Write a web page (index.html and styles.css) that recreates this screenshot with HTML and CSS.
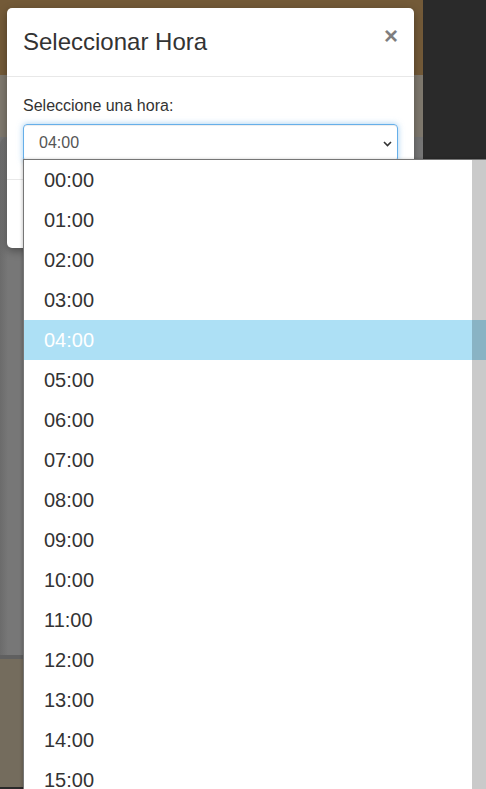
FILE: index.html
```html
<!DOCTYPE html>
<html lang="es">
<head>
<meta charset="utf-8">
<title>Seleccionar Hora</title>
<link rel="stylesheet" href="styles.css">
</head>
<body>
<div class="page">
  <div class="band"></div>
  <div class="side"></div>
  <div class="beige"></div>
  <div class="panel"></div>
  <div class="bottom"></div>
</div>

<div class="modal">
  <div class="modal-header">
    <h4 class="modal-title">Seleccionar Hora</h4>
    <button class="close" type="button">×</button>
  </div>
  <div class="modal-body">
    <label class="field-label">Seleccione una hora:</label>
    <div class="select">
      <span class="select-value">04:00</span>
      <svg class="chevron" width="9" height="6" viewBox="0 0 9 6"><path d="M1 1 L4.5 4.5 L8 1" fill="none" stroke="#333" stroke-width="1.6"/></svg>
    </div>
  </div>
  <div class="modal-footer"><div class="footer-space"></div></div>
</div>

<div class="dropdown">
  <ul class="options">
    <li class="option">00:00</li>
    <li class="option">01:00</li>
    <li class="option">02:00</li>
    <li class="option">03:00</li>
    <li class="option selected">04:00</li>
    <li class="option">05:00</li>
    <li class="option">06:00</li>
    <li class="option">07:00</li>
    <li class="option">08:00</li>
    <li class="option">09:00</li>
    <li class="option">10:00</li>
    <li class="option">11:00</li>
    <li class="option">12:00</li>
    <li class="option">13:00</li>
    <li class="option">14:00</li>
    <li class="option">15:00</li>
  </ul>
  <div class="scrollbar">
    <div class="track-gap"></div>
    <div class="track-hi"></div>
  </div>
</div>
</body>
</html>
```

FILE: styles.css
```css
html, body {
  margin: 0;
  padding: 0;
}
body {
  width: 486px;
  height: 789px;
  overflow: hidden;
  position: relative;
  font-family: "Liberation Sans", Arial, sans-serif;
  background: #757575;
}

.page {
  display: grid;
  grid-template-columns: 423px 63px;
  grid-template-rows: 75px 62px 518px 134px;
  height: 789px;
}
.band {
  grid-column: 1;
  grid-row: 1;
  background: #735a38;
}
.side {
  grid-column: 2;
  grid-row: 1 / 4;
  background: #2a2a2a;
}
.beige {
  grid-column: 1;
  grid-row: 2;
  background: #7f796e;
}
.panel {
  grid-column: 1;
  grid-row: 3;
  background: linear-gradient(to right, #6b6b6b 0px, #777777 8px, #777777 100%);
  border-radius: 8px 8px 0 0;
}
.bottom {
  grid-column: 1 / -1;
  grid-row: 4;
  background: #746c5d;
  border-top: 4px solid #606060;
  border-bottom: 2px solid #2a2a2a;
}

/* Modal */
.modal {
  position: absolute;
  left: 7px;
  top: 8px;
  width: 407px;
  background: #fff;
  border-radius: 5px;
  box-shadow: 0 3px 9px rgba(0, 0, 0, 0.35);
}
.modal-header {
  display: flex;
  justify-content: space-between;
  align-items: flex-start;
  padding: 20px 16px 21px 16px;
  border-bottom: 1px solid #e8e8e8;
}
.modal-title {
  margin: 0;
  font-size: 24px;
  line-height: 27px;
  font-weight: normal;
  color: #333;
}
.close {
  margin: -4px 0 0 0;
  padding: 0;
  border: 0;
  background: transparent;
  font-family: "Liberation Sans", Arial, sans-serif;
  font-size: 24px;
  font-weight: bold;
  line-height: 24px;
  color: #000;
  opacity: 0.5;
}
.modal-body {
  padding: 17px 16px 17px 16px;
}
.field-label {
  display: block;
  font-size: 16px;
  line-height: 23px;
  color: #333;
  margin-bottom: 7px;
}
.select {
  box-sizing: border-box;
  height: 38px;
  display: flex;
  align-items: center;
  justify-content: space-between;
  padding: 0 5px 0 15px;
  border: 1px solid #66afe9;
  border-radius: 4px;
  box-shadow: inset 0 1px 1px rgba(0, 0, 0, 0.075), 0 0 6px rgba(102, 175, 233, 0.6);
  font-size: 16px;
  color: #555;
}
.chevron {
  display: block;
  margin-top: 2px;
}
.modal-footer {
  border-top: 1px solid #e8e8e8;
  padding: 15px 16px;
}
.footer-space {
  height: 38px;
}

/* Open dropdown list */
.dropdown {
  position: absolute;
  left: 23px;
  top: 159px;
  right: 0;
  bottom: 0;
  display: flex;
  background: #fff;
  border-top: 1px solid #767676;
  border-left: 1px solid #767676;
  overflow: hidden;
  box-shadow: -1px 0 3px rgba(0, 0, 0, 0.2);
}
.options {
  flex: 1;
  list-style: none;
  margin: 0;
  padding: 0;
}
.option {
  height: 40px;
  line-height: 40px;
  padding-left: 20px;
  font-size: 20px;
  color: #333;
}
.option.selected {
  background: #ade0f5;
  color: #fff;
}
.scrollbar {
  width: 14px;
  background: #cacaca;
  display: flex;
  flex-direction: column;
}
.track-gap {
  height: 160px;
}
.track-hi {
  height: 40px;
  background: #89b3c4;
}
```
